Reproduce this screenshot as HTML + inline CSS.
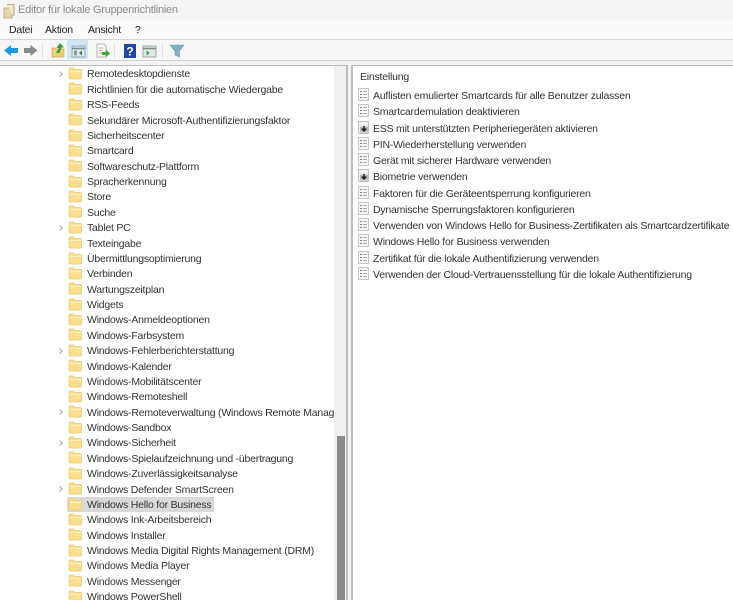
<!DOCTYPE html>
<html lang="de">
<head>
<meta charset="utf-8">
<title>Editor für lokale Gruppenrichtlinien</title>
<style>
html,body{margin:0;padding:0;width:733px;height:600px;overflow:hidden;background:#f4f4f4;}
body{position:relative;font-family:"Liberation Sans",sans-serif;font-size:10.5px;letter-spacing:-.22px;color:#333;}
.a{position:absolute;}
.title{left:18px;top:1px;font-size:11px;letter-spacing:-.25px;color:#8b8b8b;line-height:18px;}
.menu{top:23px;line-height:15px;color:#222;}
#tree{left:0;top:66px;width:334px;height:534px;overflow:hidden;}
.r{position:relative;height:15.38px;line-height:15.38px;white-space:nowrap;}
.r svg{position:absolute;left:68px;top:1px;}
.r span{position:absolute;left:87px;top:1.4px;}
.r i{position:absolute;left:58px;top:6px;width:3px;height:3px;border-top:1px solid #aaa;border-right:1px solid #aaa;transform:rotate(45deg);}
.sel{position:absolute;left:67px;top:0;width:147px;height:15.38px;background:#d9d9d9;}
#list{left:354px;top:87px;width:379px;height:200px;overflow:hidden;}
.l{position:relative;height:16.25px;line-height:16.25px;white-space:nowrap;}
.l svg{position:absolute;left:3px;top:1px;}
.l span{position:absolute;left:19px;top:1px;}
</style>
</head>
<body>
<svg width="0" height="0" style="position:absolute">
<defs>
<symbol id="f" viewBox="0 0 14 13">
<path d="M1 2Q1 1 2 1H5.500L7 2.500H12.500Q13.500 2.500 13.500 3.500V11Q13.500 12 12.500 12H2Q1 12 1 11Z" fill="#fcdf8c" stroke="#eac66c" stroke-width=".7"/>
<path d="M1.500 4.500H13" stroke="#fff2c4" stroke-width="1.200"/>
</symbol>
<symbol id="d" viewBox="0 0 13 13">
<rect x="1.500" y=".5" width="10" height="12" fill="#f8f8f8" stroke="#b8b8b8" stroke-width=".8"/>
<path d="M3.200 3.500H4.800M3.200 6.500H4.800M3.200 9.500H4.800" stroke="#666" stroke-width="1.100"/>
<path d="M6 3.500H10M6 6.500H10M6 9.500H10" stroke="#aaa" stroke-width=".9"/>
</symbol>
<symbol id="e" viewBox="0 0 13 13">
<rect x="1.500" y=".5" width="10" height="12" fill="#f5f5f5" stroke="#b0b0b0" stroke-width=".8"/>
<rect x="3" y="5.500" width="8" height="6" fill="#b9b9b9"/>
<path d="M7 5V9.500M4.800 7.500L7 10 9.200 7.500" fill="none" stroke="#222" stroke-width="1.500"/>
</symbol>
</defs>
</svg>

<!-- title bar -->
<div class="a" style="left:0;top:0;width:733px;height:20px;background:#f5f5f5"></div>
<svg class="a" style="left:2px;top:3px" width="14" height="16" viewBox="0 0 14 16">
<path d="M2 5H10V15H2Z" fill="#e6d5a6" stroke="#b9a778" stroke-width=".8"/>
<path d="M5 1.500H12V12H10" fill="#efe7cd" stroke="#a09070" stroke-width=".8"/>
</svg>
<div class="a title">Editor für lokale Gruppenrichtlinien</div>

<!-- menu -->
<div class="a" style="left:0;top:20px;width:733px;height:19px;background:#fafafa"></div>
<div class="a menu" style="left:9px">Datei</div>
<div class="a menu" style="left:45px">Aktion</div>
<div class="a menu" style="left:88px">Ansicht</div>
<div class="a menu" style="left:135px">?</div>
<div class="a" style="left:0;top:39px;width:733px;height:1px;background:#d4d4d4"></div>

<!-- toolbar -->
<div class="a" style="left:0;top:40px;width:733px;height:20px;background:#f7f7f7"></div>
<div class="a" style="left:0;top:60px;width:733px;height:1px;background:#d0d0d0"></div>
<div class="a" style="left:67px;top:40px;width:21px;height:19px;background:#cfe6f5"></div>
<svg class="a" style="left:0;top:40px" width="200" height="20" viewBox="0 0 200 20">
<path d="M4 10.500L11 5V8H18V13H11V16Z" fill="#1f9ad6"/>
<path d="M37.500 10.500L30.500 5V8H24V13H30.500V16Z" fill="#8a8a8a"/>
<path d="M42.500 3V18M114.500 3V18M162.500 3V18" stroke="#e0e0e0" stroke-width="1"/>
<path d="M52 8H55L56 9H64V17H52Z" fill="#f0d080" stroke="#c9a850" stroke-width=".7"/>
<path d="M56 13L59 8H56.500L60 3 64 7.500H61.500L59.500 13Z" fill="#3e9c2e"/>
<rect x="72" y="6" width="13" height="11" fill="#dfe7ec" stroke="#8f9ca5" stroke-width=".8"/>
<path d="M72 8.500H85" stroke="#7b8a94" stroke-width="1.600"/>
<rect x="74" y="10.500" width="3" height="5" fill="#7aa8a0"/>
<path d="M82 10.500L79 13 82 15.500Z" fill="#2f7f4a"/>
<path d="M97 4H104L106 6V17H97Z" fill="#fafafa" stroke="#a5a5a5" stroke-width=".8"/>
<path d="M99 8H103M99 10.500H102M99 13H102" stroke="#c9a070" stroke-width=".9"/>
<path d="M102 12H106V9.500L110 13.500 106 17V15H102Z" fill="#3da93a"/>
<rect x="124" y="4" width="12" height="14" fill="#2246a8"/>
<text x="130" y="15.500" font-family="Liberation Sans" font-size="12" font-weight="700" fill="#fff" text-anchor="middle" letter-spacing="0">?</text>
<rect x="143" y="6" width="13" height="11" fill="#e3e8e6" stroke="#8c9994" stroke-width=".8"/>
<path d="M143 8.500H156" stroke="#7c8b85" stroke-width="1.600"/>
<path d="M146.500 10.500L150 13 146.500 15.500Z" fill="#3aa653"/>
<path d="M170 5H184L179.500 11V17L175 15V11Z" fill="#7fb0c6" stroke="#6a9cb4" stroke-width=".6"/>
</svg>

<!-- panels -->
<div class="a" style="left:0;top:65px;width:348px;height:535px;background:#fff;border-top:1px solid #bdbdbd;border-right:2px solid #bdbdbd;box-sizing:border-box"></div>
<div class="a" style="left:334px;top:66px;width:12px;height:534px;background:#f0f0f0"></div>
<div class="a" style="left:351px;top:65px;width:382px;height:535px;background:#fff;border-top:1px solid #bdbdbd;border-left:2px solid #bdbdbd;box-sizing:border-box"></div>
<div class="a" style="left:337px;top:436px;width:8px;height:164px;background:#8c8c8c"></div>

<!-- tree -->
<div class="a" id="tree">
<div class="r"><i></i><svg width="14" height="13"><use href="#f"/></svg><span>Remotedesktopdienste</span></div>
<div class="r"><svg width="14" height="13"><use href="#f"/></svg><span>Richtlinien für die automatische Wiedergabe</span></div>
<div class="r"><svg width="14" height="13"><use href="#f"/></svg><span>RSS-Feeds</span></div>
<div class="r"><svg width="14" height="13"><use href="#f"/></svg><span>Sekundärer Microsoft-Authentifizierungsfaktor</span></div>
<div class="r"><svg width="14" height="13"><use href="#f"/></svg><span>Sicherheitscenter</span></div>
<div class="r"><svg width="14" height="13"><use href="#f"/></svg><span>Smartcard</span></div>
<div class="r"><svg width="14" height="13"><use href="#f"/></svg><span>Softwareschutz-Plattform</span></div>
<div class="r"><svg width="14" height="13"><use href="#f"/></svg><span>Spracherkennung</span></div>
<div class="r"><svg width="14" height="13"><use href="#f"/></svg><span>Store</span></div>
<div class="r"><svg width="14" height="13"><use href="#f"/></svg><span>Suche</span></div>
<div class="r"><i></i><svg width="14" height="13"><use href="#f"/></svg><span>Tablet PC</span></div>
<div class="r"><svg width="14" height="13"><use href="#f"/></svg><span>Texteingabe</span></div>
<div class="r"><svg width="14" height="13"><use href="#f"/></svg><span>Übermittlungsoptimierung</span></div>
<div class="r"><svg width="14" height="13"><use href="#f"/></svg><span>Verbinden</span></div>
<div class="r"><svg width="14" height="13"><use href="#f"/></svg><span>Wartungszeitplan</span></div>
<div class="r"><svg width="14" height="13"><use href="#f"/></svg><span>Widgets</span></div>
<div class="r"><svg width="14" height="13"><use href="#f"/></svg><span>Windows-Anmeldeoptionen</span></div>
<div class="r"><svg width="14" height="13"><use href="#f"/></svg><span>Windows-Farbsystem</span></div>
<div class="r"><i></i><svg width="14" height="13"><use href="#f"/></svg><span>Windows-Fehlerberichterstattung</span></div>
<div class="r"><svg width="14" height="13"><use href="#f"/></svg><span>Windows-Kalender</span></div>
<div class="r"><svg width="14" height="13"><use href="#f"/></svg><span>Windows-Mobilitätscenter</span></div>
<div class="r"><svg width="14" height="13"><use href="#f"/></svg><span>Windows-Remoteshell</span></div>
<div class="r"><i></i><svg width="14" height="13"><use href="#f"/></svg><span>Windows-Remoteverwaltung (Windows Remote Management)</span></div>
<div class="r"><svg width="14" height="13"><use href="#f"/></svg><span>Windows-Sandbox</span></div>
<div class="r"><i></i><svg width="14" height="13"><use href="#f"/></svg><span>Windows-Sicherheit</span></div>
<div class="r"><svg width="14" height="13"><use href="#f"/></svg><span>Windows-Spielaufzeichnung und -übertragung</span></div>
<div class="r"><svg width="14" height="13"><use href="#f"/></svg><span>Windows-Zuverlässigkeitsanalyse</span></div>
<div class="r"><i></i><svg width="14" height="13"><use href="#f"/></svg><span>Windows Defender SmartScreen</span></div>
<div class="r"><div class="sel"></div><svg width="14" height="13"><use href="#f"/></svg><span>Windows Hello for Business</span></div>
<div class="r"><svg width="14" height="13"><use href="#f"/></svg><span>Windows Ink-Arbeitsbereich</span></div>
<div class="r"><svg width="14" height="13"><use href="#f"/></svg><span>Windows Installer</span></div>
<div class="r"><svg width="14" height="13"><use href="#f"/></svg><span>Windows Media Digital Rights Management (DRM)</span></div>
<div class="r"><svg width="14" height="13"><use href="#f"/></svg><span>Windows Media Player</span></div>
<div class="r"><svg width="14" height="13"><use href="#f"/></svg><span>Windows Messenger</span></div>
<div class="r"><svg width="14" height="13"><use href="#f"/></svg><span>Windows PowerShell</span></div>
</div>

<!-- list -->
<div class="a" style="left:360px;top:70px;line-height:15px">Einstellung</div>
<div class="a" id="list">
<div class="l"><svg width="13" height="13"><use href="#d"/></svg><span>Auflisten emulierter Smartcards für alle Benutzer zulassen</span></div>
<div class="l"><svg width="13" height="13"><use href="#d"/></svg><span>Smartcardemulation deaktivieren</span></div>
<div class="l"><svg width="13" height="13"><use href="#e"/></svg><span>ESS mit unterstützten Peripheriegeräten aktivieren</span></div>
<div class="l"><svg width="13" height="13"><use href="#d"/></svg><span>PIN-Wiederherstellung verwenden</span></div>
<div class="l"><svg width="13" height="13"><use href="#d"/></svg><span>Gerät mit sicherer Hardware verwenden</span></div>
<div class="l"><svg width="13" height="13"><use href="#e"/></svg><span>Biometrie verwenden</span></div>
<div class="l"><svg width="13" height="13"><use href="#d"/></svg><span>Faktoren für die Geräteentsperrung konfigurieren</span></div>
<div class="l"><svg width="13" height="13"><use href="#d"/></svg><span>Dynamische Sperrungsfaktoren konfigurieren</span></div>
<div class="l"><svg width="13" height="13"><use href="#d"/></svg><span>Verwenden von Windows Hello for Business-Zertifikaten als Smartcardzertifikate</span></div>
<div class="l"><svg width="13" height="13"><use href="#d"/></svg><span>Windows Hello for Business verwenden</span></div>
<div class="l"><svg width="13" height="13"><use href="#d"/></svg><span>Zertifikat für die lokale Authentifizierung verwenden</span></div>
<div class="l"><svg width="13" height="13"><use href="#d"/></svg><span>Verwenden der Cloud-Vertrauensstellung für die lokale Authentifizierung</span></div>
</div>
</body>
</html>
